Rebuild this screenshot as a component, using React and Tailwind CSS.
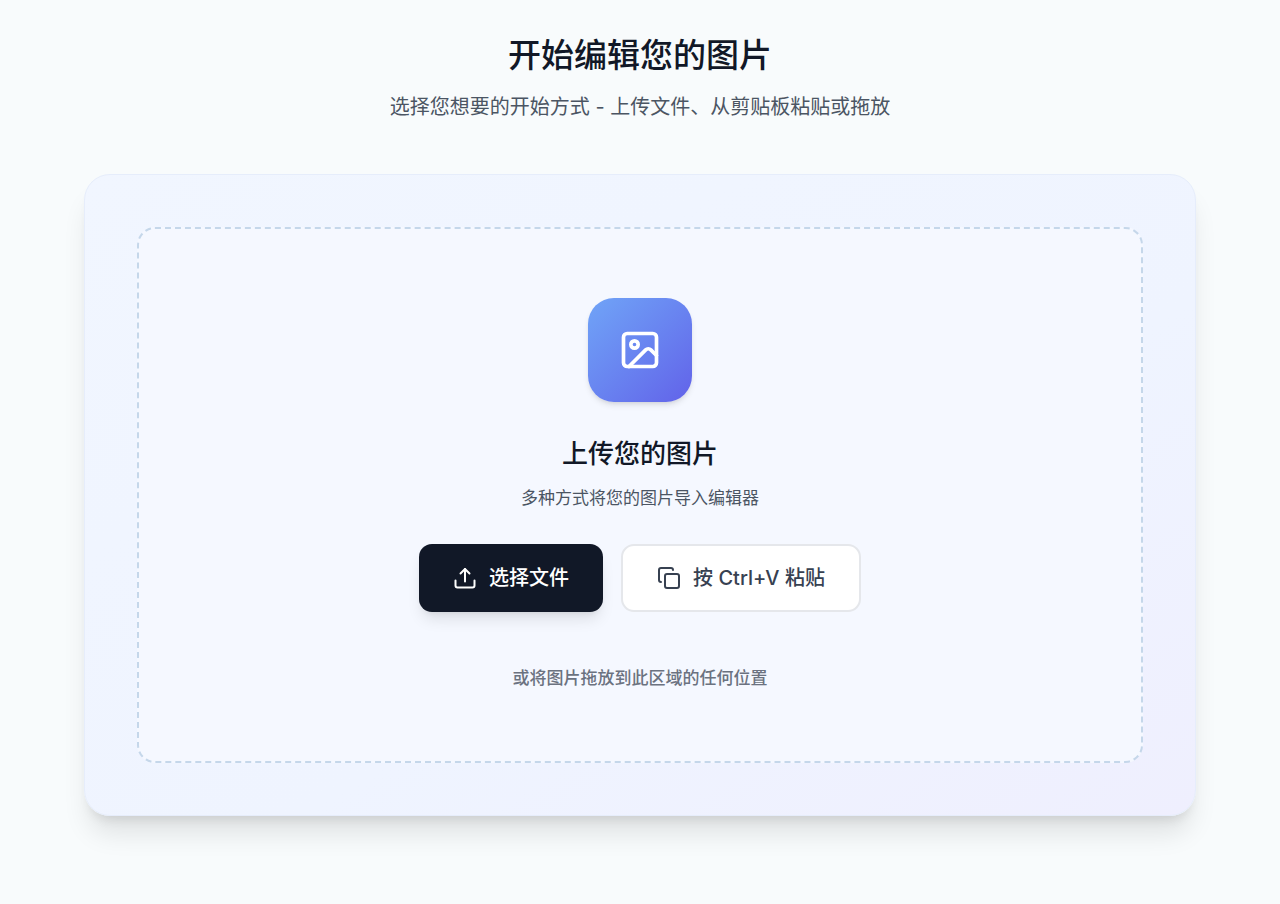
import React, { useRef } from "react";
import { Copy, Image } from "lucide-react";

const UploadIcon = () => (
  <svg
    className="size-6"
    viewBox="0 0 24 24"
    fill="none"
    stroke="currentColor"
    strokeWidth="2"
    strokeLinecap="round"
    strokeLinejoin="round"
    aria-hidden="true"
  >
    <path d="M12 15.5V3" />
    <path d="m7.5 7.5 4.5-4.5 4.5 4.5" />
    <path d="M2.5 14.5v5a2 2 0 0 0 2 2h15a2 2 0 0 0 2-2v-5" />
  </svg>
);

const App = () => {
  const fileInput = useRef(null);

  return (
    <main className="min-h-screen w-full bg-[#f8fbfc] px-6 pt-8 pb-22 font-[Inter,'Noto_Sans_CJK_SC',sans-serif] md:px-[84px]">
      {/* Heading */}
      <div className="mb-12 text-center">
        <h1 className="mb-2.5 text-[33px] leading-[46px] font-medium text-[#111827]">
          开始编辑您的图片
        </h1>
        <p className="text-[20px] leading-[38px] text-[#4b5563]">
          选择您想要的开始方式 - 上传文件、从剪贴板粘贴或拖放
        </p>
      </div>

      {/* Upload card */}
      <section className="rounded-[26px] border border-[#e6edfb] bg-linear-to-br from-[#f1f6ff] via-[#eff4ff] via-60% to-[#efeffe] p-[52px] shadow-[0_22px_27px_-5px_rgba(0,0,0,0.1),0_9px_11px_-6px_rgba(0,0,0,0.1)]">
        <div className="flex flex-col items-center rounded-[18px] border-2 border-dashed border-[#c5d7ea] bg-[#f5f8ff] px-6 py-[69px] text-center">
          <div className="mb-8 flex size-[104px] items-center justify-center rounded-[26px] bg-linear-to-br from-[#70a4f7] to-[#6262e9] shadow-md">
            <Image className="size-11 text-white" />
          </div>
          <h2 className="mb-3 text-[26px] leading-10 font-medium text-[#111827]">
            上传您的图片
          </h2>
          <p className="mb-[34px] text-[17px] leading-6 text-[#4b5563]">
            多种方式将您的图片导入编辑器
          </p>

          <div className="mb-13 flex flex-col gap-[18px] sm:flex-row">
            <input
              ref={fileInput}
              type="file"
              accept="image/*"
              aria-label="选择文件"
              className="hidden"
            />
            <button
              type="button"
              onClick={() => fileInput.current.click()}
              className="flex h-[68px] items-center justify-center gap-3 rounded-[13px] bg-[#111827] px-[34px] text-[20px] font-medium text-white shadow-lg hover:bg-[#1f2937]"
            >
              <UploadIcon />
              选择文件
            </button>
            <button
              type="button"
              className="flex h-[68px] items-center justify-center gap-3 rounded-[13px] border-2 border-[#e5e7eb] bg-white px-[34px] text-[20px] font-medium text-[#374151] hover:bg-gray-50"
            >
              <Copy className="size-6" />
              按 Ctrl+V 粘贴
            </button>
          </div>

          <p className="text-[17px] leading-7 font-medium text-[#6b7280]">
            或将图片拖放到此区域的任何位置
          </p>
        </div>
      </section>
    </main>
  );
};

export default App;
